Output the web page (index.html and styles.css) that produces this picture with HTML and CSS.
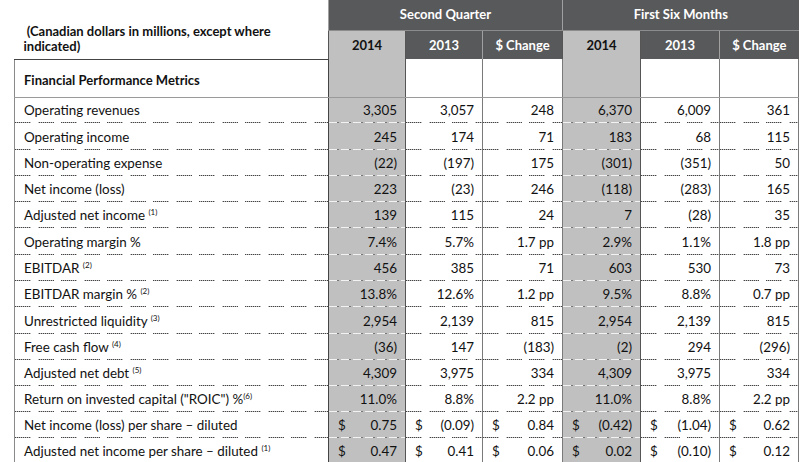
FILE: index.html
```html
<!DOCTYPE html>
<html>
<head>
<meta charset="utf-8">
<link rel="stylesheet" href="styles.css">
</head>
<body>
<table class="fin">
  <colgroup>
    <col class="c-label"><col class="c-a"><col class="c-a"><col class="c-b"><col class="c-c"><col class="c-d"><col class="c-d">
  </colgroup>
  <thead>
    <tr class="h1">
      <th class="caption" rowspan="2">&nbsp;(Canadian dollars in millions, except where<br>indicated)</th>
      <th class="grp" colspan="3">Second Quarter</th>
      <th class="grp" colspan="3">First Six Months</th>
    </tr>
    <tr class="h2">
      <th class="hl">2014</th><th class="dk">2013</th><th class="dk">$ Change</th>
      <th class="hl">2014</th><th class="dk">2013</th><th class="dk">$ Change</th>
    </tr>
  </thead>
  <tbody>
    <tr class="sect">
      <td class="label">Financial Performance Metrics</td>
      <td class="g"></td><td></td><td></td><td class="g"></td><td></td><td></td>
    </tr>
    <tr><td class="label">Operating revenues</td><td class="g">3,305</td><td>3,057</td><td>248</td><td class="g">6,370</td><td>6,009</td><td>361</td></tr>
    <tr class="r27"><td class="label">Operating income</td><td class="g">245</td><td>174</td><td>71</td><td class="g">183</td><td>68</td><td>115</td></tr>
    <tr><td class="label">Non-operating expense</td><td class="g">(22)</td><td>(197)</td><td>175</td><td class="g">(301)</td><td>(351)</td><td>50</td></tr>
    <tr><td class="label">Net income (loss)</td><td class="g">223</td><td>(23)</td><td>246</td><td class="g">(118)</td><td>(283)</td><td>165</td></tr>
    <tr><td class="label">Adjusted net income <sup>(1)</sup></td><td class="g">139</td><td>115</td><td>24</td><td class="g">7</td><td>(28)</td><td>35</td></tr>
    <tr class="r27"><td class="label">Operating margin %</td><td class="g">7.4%</td><td>5.7%</td><td>1.7 pp</td><td class="g">2.9%</td><td>1.1%</td><td>1.8 pp</td></tr>
    <tr><td class="label">EBITDAR <sup>(2)</sup></td><td class="g">456</td><td>385</td><td>71</td><td class="g">603</td><td>530</td><td>73</td></tr>
    <tr><td class="label">EBITDAR margin % <sup>(2)</sup></td><td class="g">13.8%</td><td>12.6%</td><td>1.2 pp</td><td class="g">9.5%</td><td>8.8%</td><td>0.7 pp</td></tr>
    <tr class="r27"><td class="label">Unrestricted liquidity <sup>(3)</sup></td><td class="g">2,954</td><td>2,139</td><td>815</td><td class="g">2,954</td><td>2,139</td><td>815</td></tr>
    <tr><td class="label">Free cash flow <sup>(4)</sup></td><td class="g">(36)</td><td>147</td><td>(183)</td><td class="g">(2)</td><td>294</td><td>(296)</td></tr>
    <tr><td class="label">Adjusted net debt <sup>(5)</sup></td><td class="g">4,309</td><td>3,975</td><td>334</td><td class="g">4,309</td><td>3,975</td><td>334</td></tr>
    <tr><td class="label">Return on invested capital (&quot;ROIC&quot;) %<sup>(6)</sup></td><td class="g">11.0%</td><td>8.8%</td><td>2.2 pp</td><td class="g">11.0%</td><td>8.8%</td><td>2.2 pp</td></tr>
    <tr><td class="label">Net income (loss) per share &ndash; diluted</td>
      <td class="g"><div class="cur"><span>$</span><span>0.75</span></div></td>
      <td><div class="cur"><span>$</span><span>(0.09)</span></div></td>
      <td><div class="cur"><span>$</span><span>0.84</span></div></td>
      <td class="g"><div class="cur"><span>$</span><span>(0.42)</span></div></td>
      <td><div class="cur"><span>$</span><span>(1.04)</span></div></td>
      <td><div class="cur"><span>$</span><span>0.62</span></div></td></tr>
    <tr class="last"><td class="label">Adjusted net income per share &ndash; diluted <sup>(1)</sup></td>
      <td class="g"><div class="cur"><span>$</span><span>0.47</span></div></td>
      <td><div class="cur"><span>$</span><span>0.41</span></div></td>
      <td><div class="cur"><span>$</span><span>0.06</span></div></td>
      <td class="g"><div class="cur"><span>$</span><span>0.02</span></div></td>
      <td><div class="cur"><span>$</span><span>(0.10)</span></div></td>
      <td><div class="cur"><span>$</span><span>0.12</span></div></td></tr>
  </tbody>
</table>
</body>
</html>
```
FILE: styles.css
```css
html, body {
  margin: 0;
  padding: 0;
  background: #fff;
}
body {
  font-family: Lato, "Open Sans", sans-serif;
  font-size: 13.4px;
  color: #111;
}
.fin {
  margin-left: 14px;
  border-collapse: collapse;
  table-layout: fixed;
  width: 784px;
}
.c-label { width: 314px; }
.c-a { width: 77px; }
.c-b { width: 80px; }
.c-c { width: 78px; }
.c-d { width: 79px; }

.fin th {
  font-weight: 700;
  font-size: 13px;
  padding: 0;
  text-align: center;
}
.h1 { height: 30px; }
.h2 { height: 29px; }
.h1 .grp {
  background: #58595b;
  color: #fff;
  border-left: 1px solid #a0a0a0;
  border-bottom: 1px solid #8c8c8c;
  vertical-align: middle;
  padding-bottom: 2px;
}
.fin .caption {
  text-align: left;
  vertical-align: bottom;
  padding: 0 0 5px 9px;
  line-height: 15px;
  border-bottom: 1px solid #444;
  color: #111;
}
.h2 th {
  border-left: 1px solid #a0a0a0;
  vertical-align: middle;
}
.h2 .dk {
  background: #58595b;
  color: #fff;
}
.h2 .hl {
  background: #c0c0c0;
  color: #111;
  border-left: 1px solid #555;
  border-right: 1px solid #555;
}

.fin td {
  padding: 0 8px 0 9px;
  text-align: right;
  border-left: 1px solid #7a7a7a;
  border-right: 1px solid #7a7a7a;
  vertical-align: middle;
  background-image:
    repeating-linear-gradient(90deg, transparent 0 16px, #fff 16px 23px),
    repeating-linear-gradient(90deg, #444 0 1px, #bbb 1px 2px);
  background-size: 100% 1px, 100% 1px;
  background-position: left bottom, left bottom;
  background-repeat: no-repeat, no-repeat;
  white-space: nowrap;
}
.fin td.label {
  text-align: left;
  border-left: 1px solid #8a8a8a;
  border-right: 1px solid #444;
}
.fin td.g {
  background-color: #c0c0c0;
  background-image:
    repeating-linear-gradient(90deg, #f2f2f2 0 8px, #777 8px 10px, transparent 10px 12px);
  background-size: 100% 1px;
  border-left: 1px solid #555;
  border-right: 1px solid #555;
}
tbody tr { height: 26px; }
tbody tr.r27 { height: 27px; }
tbody tr.sect { height: 38px; }
.fin tr.sect td {
  background-image: none;
  border-bottom: 1px solid #9a9a9a;
}
.fin tr.sect td.label {
  font-weight: 700;
  font-size: 13px;
  padding-top: 3px;
}
.fin tr.last td { background-image: none; }

sup {
  font-size: 8px;
  vertical-align: 5px;
  line-height: 0;
}
.cur {
  display: flex;
  justify-content: space-between;
}
```
